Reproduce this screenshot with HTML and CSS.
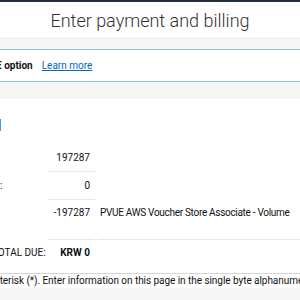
FILE: index.html
```html
<!DOCTYPE html>
<html lang="en">
<head>
    <meta charset="UTF-8">
    <meta name="viewport" content="width=device-width, initial-scale=1.0">
    <title>Enter payment and billing</title>
    <link rel="stylesheet" href="styles.css">
</head>
<body>
    <div class="topbar"></div>
    <header class="title-bar">
        <h1>Enter payment and billing</h1>
    </header>

    <main class="page">
        <div class="notice">
            <strong>Pay with a PVUE option</strong>
            <a href="#">Learn more</a>
        </div>

        <section class="card">
            <h2>Order Total</h2>
            <table class="summary">
                <tr>
                    <td class="label">Price</td>
                    <td class="amount">197287</td>
                    <td class="desc"></td>
                </tr>
                <tr>
                    <td class="label">Estimated tax:</td>
                    <td class="amount">0</td>
                    <td class="desc"></td>
                </tr>
                <tr class="discount">
                    <td class="label">Voucher</td>
                    <td class="amount">-197287</td>
                    <td class="desc">PVUE AWS Voucher Store Associate - Volume</td>
                </tr>
                <tr class="total">
                    <td class="label"><span>TOTAL DUE:</span></td>
                    <td class="amount"><strong>KRW 0</strong></td>
                    <td class="desc"></td>
                </tr>
            </table>
        </section>

        <p class="footnote">Required fields are marked with an asterisk (*). Enter information on this page in the single byte alphanumeric characters.</p>
    </main>
</body>
</html>
```

FILE: styles.css
```css
* {
    margin: 0;
    padding: 0;
    box-sizing: border-box;
}

body {
    font-family: Roboto, "Liberation Sans", sans-serif;
    background-color: #f6f6f6;
    color: #111;
    overflow: hidden;
}

.topbar {
    height: 2px;
    background-color: #232f3e;
}

.title-bar {
    height: 37px;
    background-color: white;
    border-bottom: 1px solid #ececec;
    display: flex;
    justify-content: center;
    align-items: center;
}

.title-bar h1 {
    font-size: 18px;
    font-weight: 300;
    color: #333;
}

/* the screenshot only shows a slice of a wider page */
.page {
    width: 600px;
    margin-left: -173px;
    padding-top: 10px;
}

.notice {
    height: 33px;
    background-color: white;
    border-top: 1px solid #86c5cd;
    border-bottom: 1px solid #86c5cd;
    display: flex;
    align-items: center;
    gap: 9px;
    padding-left: 101px;
    font-size: 10px;
}

.notice strong {
    color: #111;
}

.notice a {
    color: #0066c0;
}

.card {
    background-color: white;
    margin-top: 17px;
    padding: 17px 0 7px 0;
}

.card h2 {
    font-size: 16px;
    line-height: 20px;
    font-weight: 400;
    padding-left: 96px;
    margin-bottom: 8px;
}

.summary {
    border-spacing: 2px 0;
    font-size: 10px;
    line-height: 12px;
    margin-left: 93px;
}

.summary td {
    padding: 8px 0 7px 0;
    vertical-align: top;
}

.summary .label {
    width: 124px;
    padding-left: 17px;
}

.summary .amount {
    width: 47px;
    text-align: right;
    padding-right: 5px;
    border-bottom: 1px solid #e7e7e7;
}

.summary .desc {
    padding-left: 3px;
}

.summary .discount td {
    padding-top: 7px;
    padding-bottom: 20px;
}

.summary .discount .desc {
    width: 300px;
    letter-spacing: -0.3px;
    border-bottom: 1px solid #e7e7e7;
}

.summary .total td {
    padding-top: 7px;
}

.summary .total .amount {
    border-bottom: none;
}

.summary .total .label span {
    padding-left: 53px;
}

.footnote {
    background-color: white;
    border-top: 1px solid #d5d5d5;
    font-size: 10px;
    letter-spacing: -0.05px;
    padding: 1px 0 2px 8px;
}
```
